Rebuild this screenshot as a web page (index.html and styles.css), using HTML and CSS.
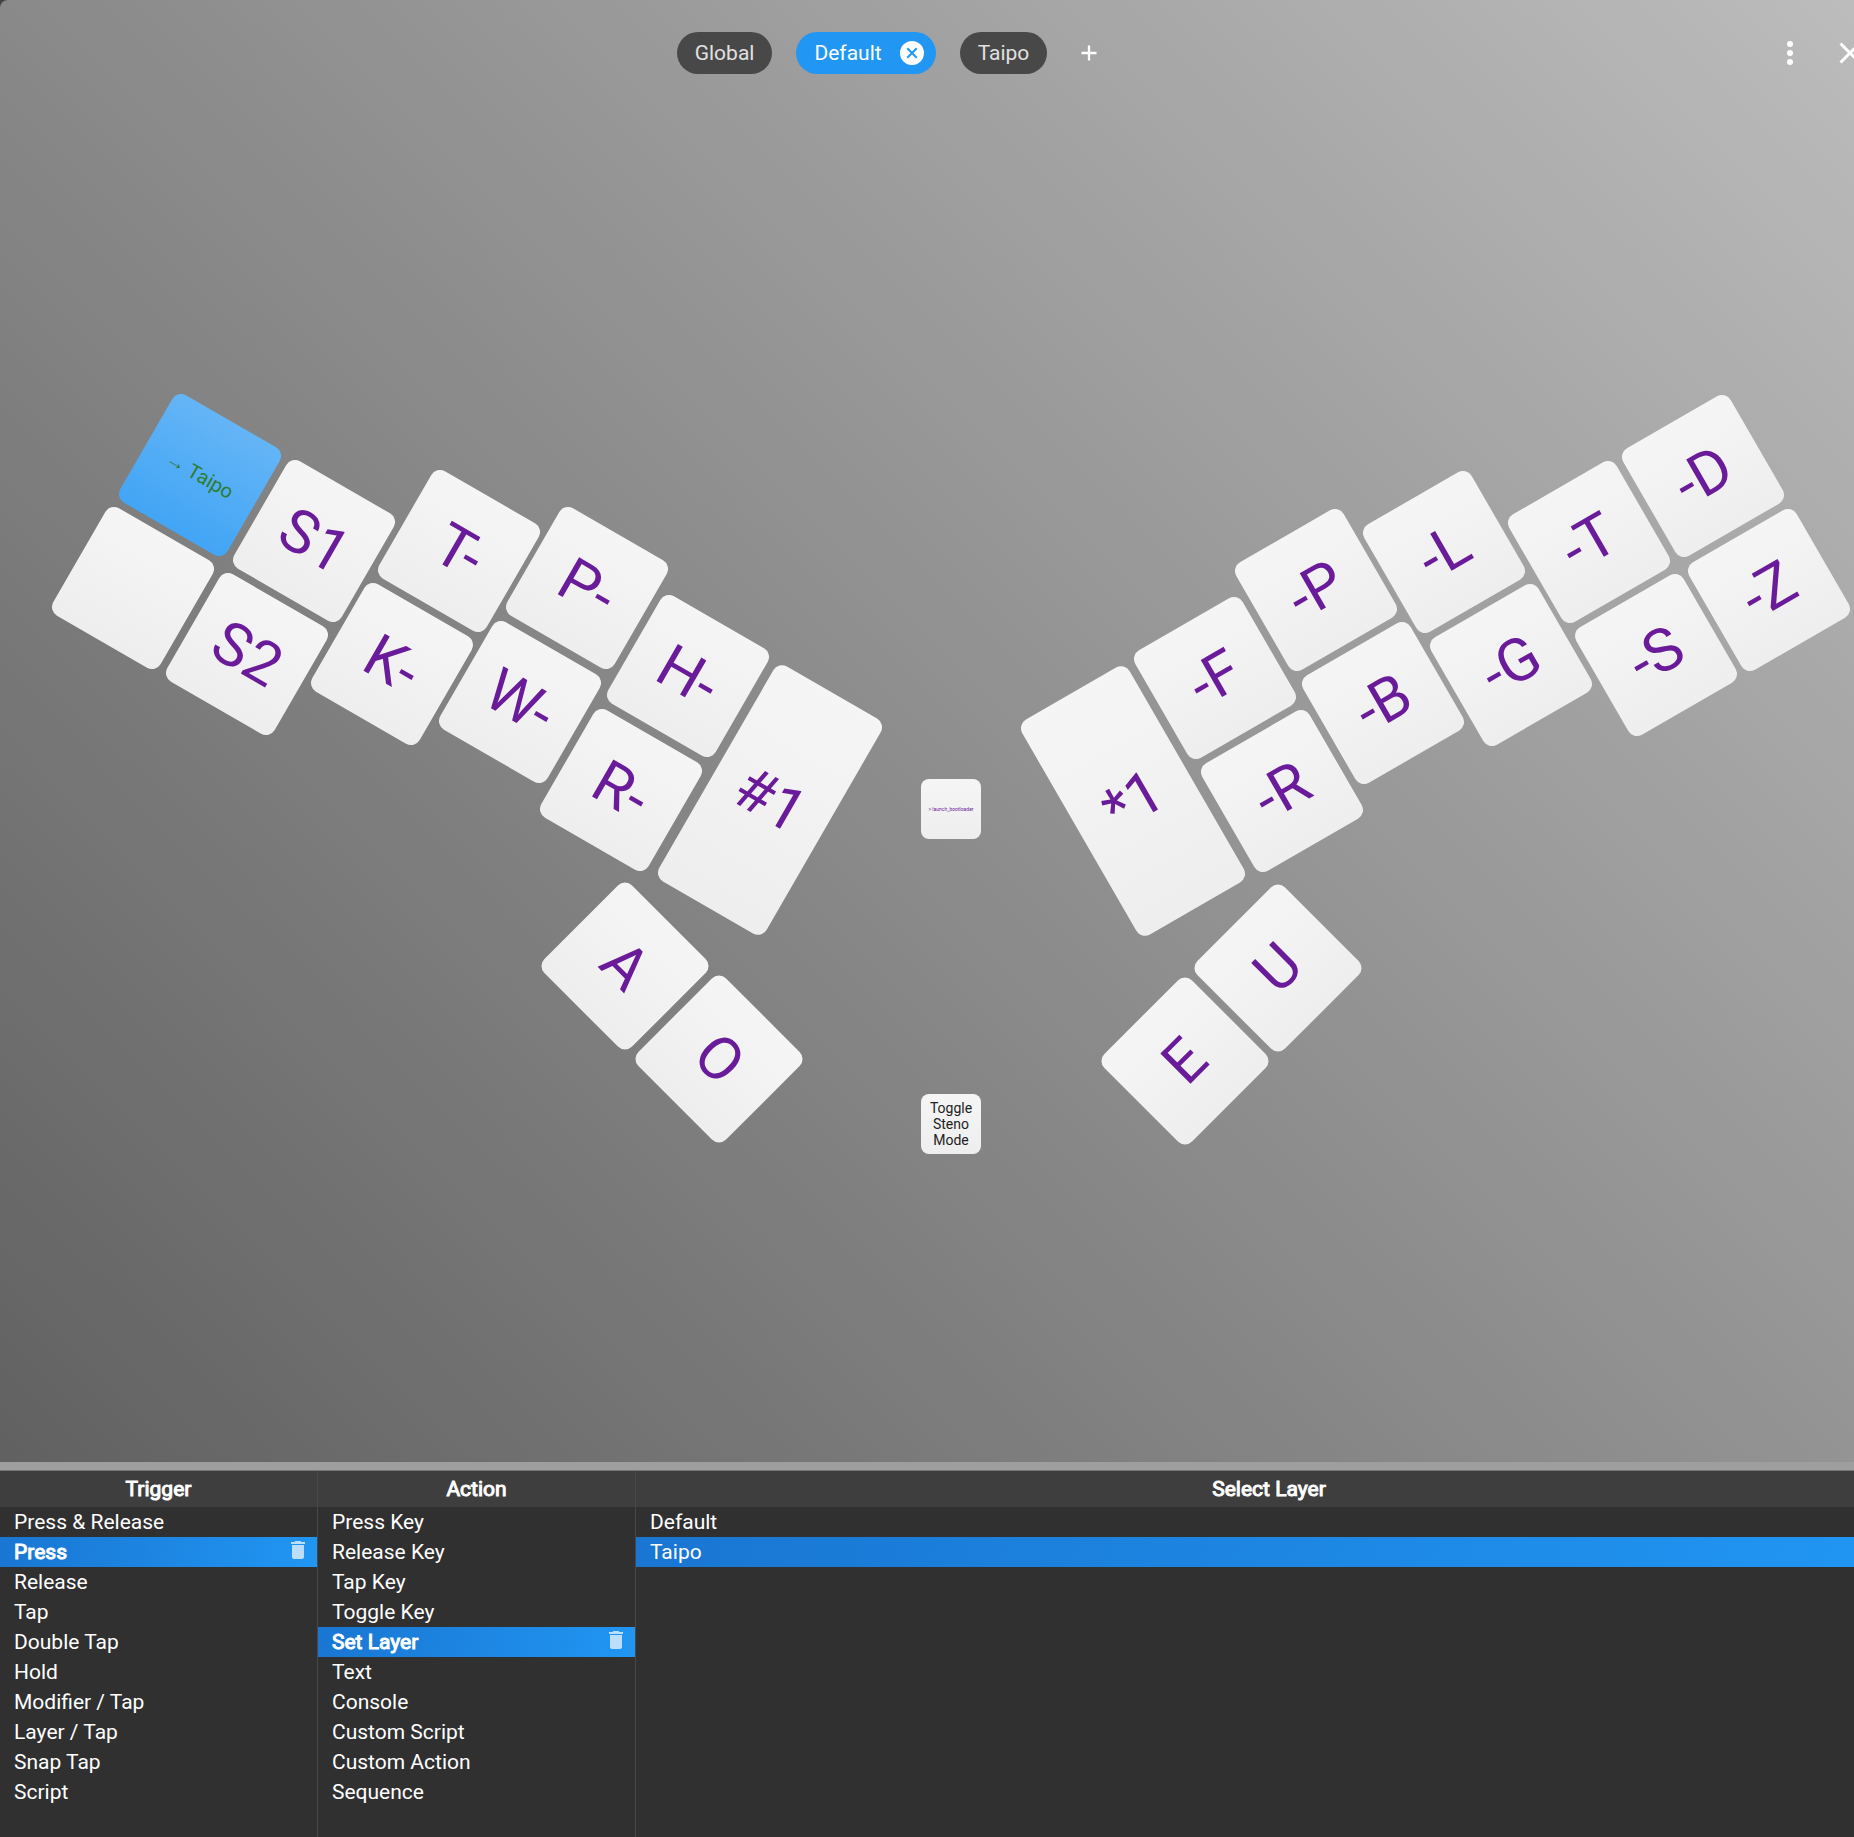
FILE: index.html
```html
<!DOCTYPE html>
<html lang="en">
<head>
<meta charset="utf-8">
<meta name="viewport" content="width=device-width, initial-scale=1">
<title>Keyboard layout editor</title>
<link rel="stylesheet" href="styles.css">
</head>
<body>
<div class="app">
  <main class="stage">
    <header class="topbar">
      <nav class="tabs" aria-label="Layers">
        <button class="tab" type="button">Global</button>
        <div class="tab tab-active">
          <button class="tab-label" type="button">Default</button>
          <button class="tab-close" type="button" aria-label="Delete layer">
            <svg viewBox="0 0 24 24" width="24" height="24"><circle cx="12" cy="12" r="12" fill="#fff"/><path d="M7.3 7.3l9.4 9.4M16.7 7.3l-9.4 9.4" stroke="#2196f3" stroke-width="2"/></svg>
          </button>
        </div>
        <button class="tab" type="button">Taipo</button>
        <button class="tab-add" type="button" aria-label="Add layer">
          <svg viewBox="0 0 24 24" width="24" height="24"><path d="M4.500 12h15M12 4.500v15" stroke="#fff" stroke-width="2.300"/></svg>
        </button>
      </nav>
      <div class="window-actions">
        <button class="icon-button" type="button" aria-label="Menu">
          <svg viewBox="0 0 24 24" width="36" height="36" fill="#fff"><circle cx="12" cy="6" r="2"/><circle cx="12" cy="12" r="2"/><circle cx="12" cy="18" r="2"/></svg>
        </button>
        <button class="icon-button" type="button" aria-label="Close">
          <svg viewBox="0 0 24 24" width="36" height="36" fill="#fff"><path d="M19 6.410L17.590 5 12 10.590 6.410 5 5 6.410 10.590 12 5 17.590 6.410 19 12 13.410 17.590 19 19 17.590 13.410 12z"/></svg>
        </button>
      </div>
    </header>

    <div class="board">
      <button class="key left selected layer" type="button" style="--x:-751px;--y:-309px">→ Taipo</button>
      <button class="key left" type="button" aria-label="Unassigned" style="--x:-818px;--y:-196px"></button>
      <button class="key left" type="button" style="--x:-637px;--y:-243px">S1</button>
      <button class="key left" type="button" style="--x:-704px;--y:-130px">S2</button>
      <button class="key left" type="button" style="--x:-492px;--y:-233px">T-</button>
      <button class="key left" type="button" style="--x:-559px;--y:-120px">K-</button>
      <button class="key left" type="button" style="--x:-364px;--y:-196px">P-</button>
      <button class="key left" type="button" style="--x:-431px;--y:-82px">W-</button>
      <button class="key left" type="button" style="--x:-263px;--y:-108px">H-</button>
      <button class="key left" type="button" style="--x:-330px;--y:6px">R-</button>
      <button class="key left tall" type="button" style="--x:-181px;--y:16px">#1</button>
      <button class="key left-thumb" type="button" style="--x:-326px;--y:182px">A</button>
      <button class="key left-thumb" type="button" style="--x:-232px;--y:275px">O</button>

      <button class="key small command" type="button" style="--x:0px;--y:25px">&gt; launch_bootloader</button>
      <button class="key small" type="button" style="--x:0px;--y:340px">Toggle Steno Mode</button>

      <button class="key right tall" type="button" style="--x:182px;--y:17px">*1</button>
      <button class="key right" type="button" style="--x:264px;--y:-106px">-F</button>
      <button class="key right" type="button" style="--x:331px;--y:7px">-R</button>
      <button class="key right" type="button" style="--x:365px;--y:-194px">-P</button>
      <button class="key right" type="button" style="--x:432px;--y:-81px">-B</button>
      <button class="key right" type="button" style="--x:493px;--y:-232px">-L</button>
      <button class="key right" type="button" style="--x:560px;--y:-119px">-G</button>
      <button class="key right" type="button" style="--x:638px;--y:-242px">-T</button>
      <button class="key right" type="button" style="--x:705px;--y:-129px">-S</button>
      <button class="key right" type="button" style="--x:752px;--y:-308px">-D</button>
      <button class="key right" type="button" style="--x:818px;--y:-194px">-Z</button>
      <button class="key right-thumb" type="button" style="--x:234px;--y:277px">E</button>
      <button class="key right-thumb" type="button" style="--x:327px;--y:184px">U</button>
    </div>
  </main>

  <div class="splitter"></div>

  <div class="panel">
    <section class="column">
      <h2 class="column-title">Trigger</h2>
      <ul class="options">
        <li class="option"><button class="option-label" type="button">Press &amp; Release</button></li>
        <li class="option option-selected option-set">
          <button class="option-label" type="button">Press</button>
          <button class="option-delete" type="button" aria-label="Clear Press">
            <svg viewBox="0 0 24 24" width="24" height="24"><path d="M6 19c0 1.100.9 2 2 2h8c1.100 0 2-.9 2-2V7H6v12zM19 4h-3.500l-1-1h-5l-1 1H5v2h14V4z"/></svg>
          </button>
        </li>
        <li class="option"><button class="option-label" type="button">Release</button></li>
        <li class="option"><button class="option-label" type="button">Tap</button></li>
        <li class="option"><button class="option-label" type="button">Double Tap</button></li>
        <li class="option"><button class="option-label" type="button">Hold</button></li>
        <li class="option"><button class="option-label" type="button">Modifier / Tap</button></li>
        <li class="option"><button class="option-label" type="button">Layer / Tap</button></li>
        <li class="option"><button class="option-label" type="button">Snap Tap</button></li>
        <li class="option"><button class="option-label" type="button">Script</button></li>
      </ul>
    </section>
    <section class="column">
      <h2 class="column-title">Action</h2>
      <ul class="options">
        <li class="option"><button class="option-label" type="button">Press Key</button></li>
        <li class="option"><button class="option-label" type="button">Release Key</button></li>
        <li class="option"><button class="option-label" type="button">Tap Key</button></li>
        <li class="option"><button class="option-label" type="button">Toggle Key</button></li>
        <li class="option option-selected option-set">
          <button class="option-label" type="button">Set Layer</button>
          <button class="option-delete" type="button" aria-label="Clear Set Layer">
            <svg viewBox="0 0 24 24" width="24" height="24"><path d="M6 19c0 1.100.9 2 2 2h8c1.100 0 2-.9 2-2V7H6v12zM19 4h-3.500l-1-1h-5l-1 1H5v2h14V4z"/></svg>
          </button>
        </li>
        <li class="option"><button class="option-label" type="button">Text</button></li>
        <li class="option"><button class="option-label" type="button">Console</button></li>
        <li class="option"><button class="option-label" type="button">Custom Script</button></li>
        <li class="option"><button class="option-label" type="button">Custom Action</button></li>
        <li class="option"><button class="option-label" type="button">Sequence</button></li>
      </ul>
    </section>
    <section class="column column-wide">
      <h2 class="column-title">Select Layer</h2>
      <ul class="options">
        <li class="option"><button class="option-label" type="button">Default</button></li>
        <li class="option option-selected"><button class="option-label" type="button">Taipo</button></li>
      </ul>
    </section>
  </div>
</div>
</body>
</html>
```
FILE: styles.css
```css
*, *::before, *::after { box-sizing: border-box; }

body {
  margin: 0;
  overflow: hidden;
  background: #424242;
  color: #fff;
  font-family: Roboto, "Liberation Sans", sans-serif;
  font-size: 21px;
}

button {
  margin: 0;
  padding: 0;
  border: 0;
  background: none;
  color: inherit;
  font: inherit;
  cursor: pointer;
}

svg { display: block; }

/* The editor runs a little past the right edge of the window. */
.app {
  display: flex;
  flex-direction: column;
  width: calc(100% + 48px);
  min-height: 100vh;
}

.stage {
  display: flex;
  flex: 1;
  flex-direction: column;
  border-top-left-radius: 8px;
  background: linear-gradient(45deg, #616161, #bdbdbd);
}

/* Layer tabs */
.topbar {
  display: flex;
  align-items: center;
  height: 106px;
  padding: 0 28px 0 18px;
}

.tabs {
  display: flex;
  flex: 1;
  align-items: center;
  justify-content: center;
  gap: 24px;
}

.tab {
  display: flex;
  align-items: center;
  height: 42px;
  padding: 0 18px;
  border-radius: 21px;
  background: #484848;
  color: #e0e0e0;
}

.tab-active {
  gap: 18px;
  padding-right: 12px;
  background: #2196f3;
  color: #fff;
}

.tab-add {
  display: flex;
  align-items: center;
  justify-content: center;
  width: 36px;
  height: 42px;
}

.window-actions {
  display: flex;
  gap: 12px;
}

.icon-button {
  display: flex;
  align-items: center;
  justify-content: center;
  width: 48px;
  height: 48px;
}

/* Keyboard: each key is placed from the centre of the board */
.board {
  position: relative;
  flex: 1;
  min-height: 800px;
}

.key {
  position: absolute;
  top: calc(50% + var(--y));
  left: calc(50% + var(--x));
  display: flex;
  align-items: center;
  justify-content: center;
  width: 124px;
  height: 124px;
  border-radius: 10px;
  background: linear-gradient(#f5f5f5, #eee);
  color: #6a1b9a;
  font-size: 60px;
  line-height: 1;
  white-space: nowrap;
  transform: translate(-50%, -50%) rotate(var(--angle, 0deg));
}

.left { --angle: 30deg; }
.right { --angle: -30deg; }
.left-thumb { --angle: 45deg; }
.right-thumb { --angle: -45deg; }
.tall { height: 248px; }

.selected { background: linear-gradient(#64b5f6, #42a5f5); }

.layer {
  color: #2e7d32;
  font-size: 20px;
}

.small {
  width: 60px;
  height: 60px;
  border-radius: 8px;
  color: #212121;
  font-size: 14px;
  line-height: 16px;
  white-space: normal;
}

.command {
  color: #6a1b9a;
  font-size: 5px;
  white-space: nowrap;
}

.splitter {
  height: 9px;
  border-bottom: 1px solid #757575;
  background: #9e9e9e;
}

/* Binding panel */
.panel {
  display: flex;
  height: 366px;
  background: #303030;
}

.column { width: 317px; }

.column + .column {
  width: 318px;
  border-left: 1px solid #484848;
}

.column + .column-wide {
  flex: 1;
  width: auto;
}

.column-title {
  margin: 0;
  background: #3e3e3e;
  font-size: 21px;
  font-weight: 400;
  line-height: 36px;
  text-align: center;
  -webkit-text-stroke: 1px #fff;
}

.options {
  margin: 0;
  padding: 0;
  list-style: none;
}

.option {
  display: flex;
  height: 30px;
}

.option-label {
  flex: 1;
  padding-left: 14px;
  line-height: 30px;
  text-align: left;
}

.option-selected { background: linear-gradient(105deg, #1976d2, #2196f3); }

.option-set .option-label { -webkit-text-stroke: 1px #fff; }

.option-delete {
  padding: 0 7px 4px;
  fill: #bbdefb;
}
```
